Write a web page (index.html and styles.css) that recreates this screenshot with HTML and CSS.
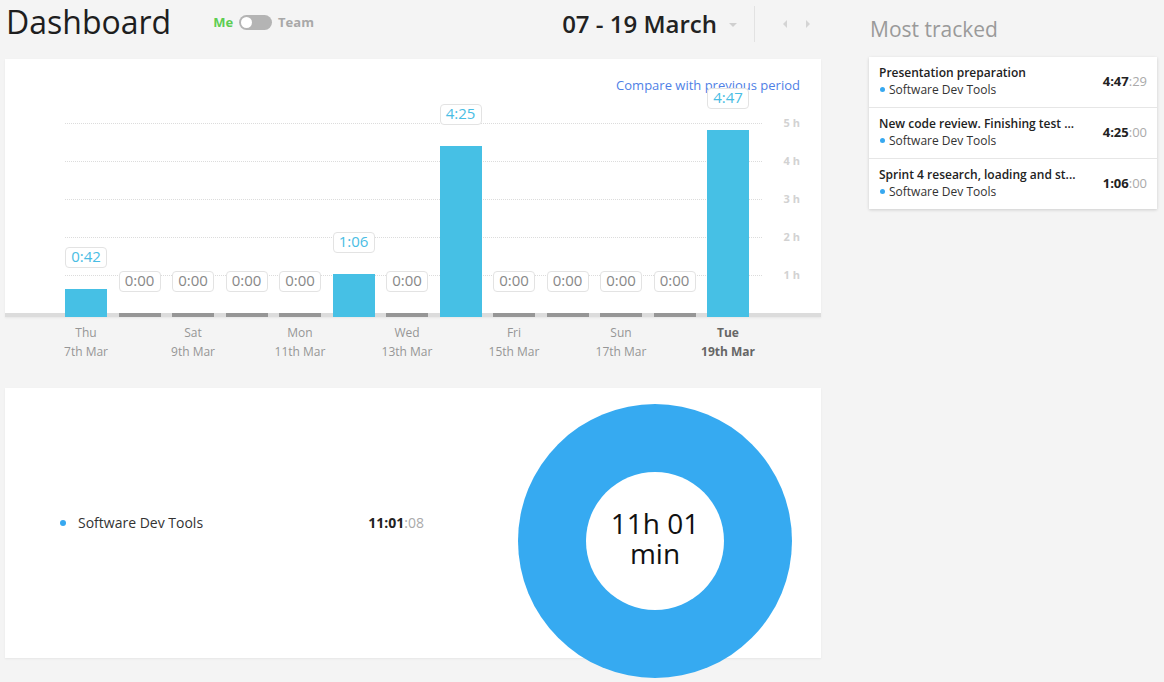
FILE: index.html
```html
<!DOCTYPE html>
<html lang="en">
<head>
<meta charset="utf-8">
<title>Dashboard</title>
<link rel="stylesheet" href="styles.css">
</head>
<body>
<div class="page">
  <div class="main">
    <header class="top">
      <h1 class="title">Dashboard</h1>
      <div class="toggle">
        <span class="me">Me</span>
        <span class="switch"><span class="knob"></span></span>
        <span class="team">Team</span>
      </div>
      <div class="range">
        <span class="range-text">07 - 19 March</span>
        <span class="caret"></span>
      </div>
      <div class="nav">
        <span class="arrow arrow-left"></span>
        <span class="arrow arrow-right"></span>
      </div>
    </header>

    <section class="card chart">
      <a class="compare">Compare with previous period</a>
      <div class="grid-lines">
        <div class="gl"><span class="gl-line"></span><span class="gl-label">5 h</span></div>
        <div class="gl"><span class="gl-line"></span><span class="gl-label">4 h</span></div>
        <div class="gl"><span class="gl-line"></span><span class="gl-label">3 h</span></div>
        <div class="gl"><span class="gl-line"></span><span class="gl-label">2 h</span></div>
        <div class="gl"><span class="gl-line"></span><span class="gl-label">1 h</span></div>
      </div>
      <div class="bars">
        <div class="col"><span class="val on">0:42</span><span class="bar on" style="height:28px"></span></div>
        <div class="col"><span class="val">0:00</span><span class="bar"></span></div>
        <div class="col"><span class="val">0:00</span><span class="bar"></span></div>
        <div class="col"><span class="val">0:00</span><span class="bar"></span></div>
        <div class="col"><span class="val">0:00</span><span class="bar"></span></div>
        <div class="col"><span class="val on">1:06</span><span class="bar on" style="height:43px"></span></div>
        <div class="col"><span class="val">0:00</span><span class="bar"></span></div>
        <div class="col"><span class="val on">4:25</span><span class="bar on" style="height:171px"></span></div>
        <div class="col"><span class="val">0:00</span><span class="bar"></span></div>
        <div class="col"><span class="val">0:00</span><span class="bar"></span></div>
        <div class="col"><span class="val">0:00</span><span class="bar"></span></div>
        <div class="col"><span class="val">0:00</span><span class="bar"></span></div>
        <div class="col"><span class="val on">4:47</span><span class="bar on" style="height:187px"></span></div>
      </div>
    </section>

    <div class="days">
      <div class="day"><span>Thu</span><span>7th Mar</span></div>
      <div class="day"></div>
      <div class="day"><span>Sat</span><span>9th Mar</span></div>
      <div class="day"></div>
      <div class="day"><span>Mon</span><span>11th Mar</span></div>
      <div class="day"></div>
      <div class="day"><span>Wed</span><span>13th Mar</span></div>
      <div class="day"></div>
      <div class="day"><span>Fri</span><span>15th Mar</span></div>
      <div class="day"></div>
      <div class="day"><span>Sun</span><span>17th Mar</span></div>
      <div class="day"></div>
      <div class="day today"><span>Tue</span><span>19th Mar</span></div>
    </div>

    <section class="card summary">
      <div class="legend">
        <span class="dot"></span>
        <span class="legend-name">Software Dev Tools</span>
        <span class="time"><b>11:01</b><span class="sec">:08</span></span>
      </div>
      <div class="donut">
        <div class="hole"><span class="hole-text">11h 01<br>min</span></div>
      </div>
    </section>
  </div>

  <aside class="side">
    <h2 class="side-title">Most tracked</h2>
    <div class="tracked">
      <div class="row">
        <div class="row-text">
          <div class="row-title">Presentation preparation</div>
          <div class="row-project"><span class="pdot"></span>Software Dev Tools</div>
        </div>
        <span class="time"><b>4:47</b><span class="sec">:29</span></span>
      </div>
      <div class="row">
        <div class="row-text">
          <div class="row-title">New code review. Finishing test ...</div>
          <div class="row-project"><span class="pdot"></span>Software Dev Tools</div>
        </div>
        <span class="time"><b>4:25</b><span class="sec">:00</span></span>
      </div>
      <div class="row">
        <div class="row-text">
          <div class="row-title">Sprint 4 research, loading and st...</div>
          <div class="row-project"><span class="pdot"></span>Software Dev Tools</div>
        </div>
        <span class="time"><b>1:06</b><span class="sec">:00</span></span>
      </div>
    </div>
  </aside>
</div>
</body>
</html>
```

FILE: styles.css
```css
* { box-sizing: border-box; }

html, body {
  margin: 0;
  padding: 0;
  background: #f4f4f4;
  font-family: "Open Sans", "Liberation Sans", sans-serif;
  color: #222;
  overflow: hidden;
}

.page {
  display: flex;
  padding-left: 5px;
  width: 1164px;
  height: 682px;
}

.main {
  width: 816px;
  flex-shrink: 0;
}

/* header */
.top {
  display: flex;
  align-items: flex-start;
  height: 59px;
}

.title {
  margin: 2px 0 0 1px;
  font-size: 32px;
  line-height: 40px;
  font-weight: 400;
  color: #1e1e1e;
}

.toggle {
  display: flex;
  align-items: center;
  margin: 14px 0 0 42px;
  font-size: 13px;
  line-height: 17px;
  font-weight: 700;
}

.me { color: #5ccd52; }
.team { color: #a8a8a8; }

.switch {
  display: flex;
  align-items: center;
  width: 33px;
  height: 15px;
  margin: 0 6px;
  border-radius: 8px;
  background: #b4b4b4;
  padding-left: 2px;
}

.knob {
  width: 11px;
  height: 11px;
  border-radius: 50%;
  background: #fff;
}

.range {
  display: flex;
  align-items: center;
  margin: 8px 0 0 auto;
}

.range-text {
  font-size: 24px;
  line-height: 32px;
  font-weight: 600;
  color: #222;
}

.caret {
  width: 0;
  height: 0;
  margin: 2px 0 0 12px;
  border-left: 4px solid transparent;
  border-right: 4px solid transparent;
  border-top: 4px solid #cfcfcf;
}

.nav {
  display: flex;
  align-items: center;
  height: 36px;
  margin: 6px 11px 0 17px;
  padding-left: 28px;
  border-left: 1px solid #e2e2e2;
  gap: 19px;
}

.arrow {
  width: 0;
  height: 0;
  border-top: 4px solid transparent;
  border-bottom: 4px solid transparent;
}

.arrow-left { border-right: 4px solid #d4d4d4; }
.arrow-right { border-left: 4px solid #d4d4d4; }

/* cards */
.card {
  background: #fff;
  box-shadow: 0 1px 2px rgba(0, 0, 0, 0.06);
}

.chart {
  position: relative;
  height: 258px;
  background: linear-gradient(#dcdcdc, #dcdcdc) bottom / 100% 4px no-repeat, #fff;
}

.compare {
  position: absolute;
  top: 17px;
  right: 21px;
  font-size: 13px;
  line-height: 18px;
  color: #4f7fe6;
  cursor: pointer;
}

.grid-lines {
  position: absolute;
  top: 64px;
  left: 60px;
  right: 21px;
}

.gl {
  display: flex;
  height: 38px;
}

.gl-line {
  flex: 1;
  margin-right: 20px;
  border-top: 1px dotted #dcdcdc;
}

.gl-label {
  width: 18px;
  margin-top: -7px;
  font-size: 11px;
  line-height: 14px;
  font-weight: 700;
  color: #d2d2d2;
  text-align: right;
  white-space: nowrap;
}

.bars {
  position: relative;
  z-index: 1;
  display: grid;
  grid-template-columns: repeat(13, 42px);
  column-gap: 11.5px;
  align-items: end;
  height: 100%;
  padding-left: 60px;
}

.col {
  display: flex;
  flex-direction: column;
  align-items: center;
}

.val {
  display: block;
  width: 42px;
  height: 21px;
  margin-bottom: 21px;
  border: 1px solid #e3e3e3;
  border-radius: 4px;
  background: #fff;
  font-size: 15px;
  line-height: 17px;
  font-weight: 500;
  text-align: center;
  color: #888;
}

.val.on { color: #49bde4; }

.bar {
  display: block;
  width: 42px;
  height: 4px;
  background: #969696;
}

.bar.on { background: #46c0e5; }

/* day labels */
.days {
  display: grid;
  grid-template-columns: repeat(13, 42px);
  column-gap: 11.5px;
  padding: 6px 0 0 60px;
  height: 71px;
}

.day {
  display: flex;
  flex-direction: column;
  align-items: center;
  font-size: 12px;
  line-height: 19px;
  color: #969696;
  white-space: nowrap;
}

.day.today {
  font-weight: 700;
  color: #666;
}

/* summary */
.summary {
  display: flex;
  height: 270px;
}

.legend {
  display: flex;
  align-items: center;
  align-self: center;
  width: 364px;
  margin-left: 55px;
  font-size: 14px;
  line-height: 20px;
  color: #333;
}

.dot {
  width: 6px;
  height: 6px;
  margin-right: 12px;
  border-radius: 50%;
  background: #37a8f0;
}

.time {
  margin-left: auto;
  color: #222;
  white-space: nowrap;
}

.time b { font-weight: 700; }
.sec { color: #aaa; }

.donut {
  display: flex;
  align-items: center;
  justify-content: center;
  flex-shrink: 0;
  width: 274px;
  height: 274px;
  margin: 16px 0 0 94px;
  border-radius: 50%;
  background: #36aaf1;
}

.hole {
  display: flex;
  align-items: center;
  justify-content: center;
  width: 138px;
  height: 138px;
  padding-bottom: 6px;
  border-radius: 50%;
  background: #fff;
}

.hole-text {
  font-size: 28px;
  line-height: 30px;
  text-align: center;
  color: #111;
}

/* side */
.side {
  width: 288px;
  margin-left: 48px;
  padding-top: 15px;
}

.side-title {
  margin: 0 0 14px 1px;
  font-size: 21px;
  line-height: 28px;
  font-weight: 400;
  color: #9a9a9a;
}

.tracked {
  background: #fff;
  box-shadow: 0 1px 3px rgba(0, 0, 0, 0.16);
}

.row {
  display: flex;
  align-items: center;
  padding: 7px 10px 9px 10px;
  border-bottom: 1px solid #e6e6e6;
}

.row:last-child { border-bottom: none; }

.row-text {
  flex: 1;
  min-width: 0;
}

.row-title {
  font-size: 12px;
  line-height: 17px;
  font-weight: 600;
  color: #222;
  white-space: nowrap;
}

.row-project {
  display: flex;
  align-items: center;
  font-size: 12px;
  line-height: 17px;
  color: #333;
}

.pdot {
  width: 5px;
  height: 5px;
  margin: 0 4px 0 1px;
  border-radius: 50%;
  background: #37a8f0;
}

.row .time {
  font-size: 13px;
  line-height: 17px;
}
```
